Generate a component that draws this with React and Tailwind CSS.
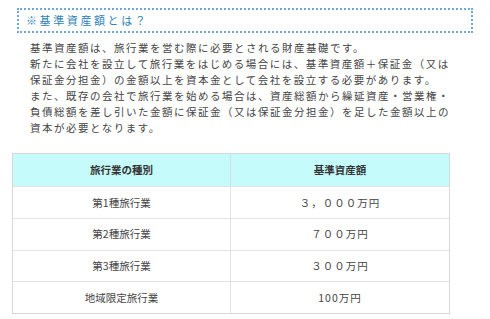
export default function App() {
  const rows = [
    ["第1種旅行業", "３，０００万円"],
    ["第2種旅行業", "７００万円"],
    ["第3種旅行業", "３００万円"],
    ["地域限定旅行業", "100万円"],
  ];
  return (
    <div className="w-[490px] h-[319px] bg-white overflow-hidden pt-[8px] text-[#333]" style={{ fontFamily: '"Noto Sans CJK JP", "Noto Sans", sans-serif' }}>
      <div className="ml-[17px] w-[456px] h-[25px] border-2 border-dotted border-[#6fa8d8] flex items-center pl-[7px]">
        <span className="text-[11px] leading-none tracking-[2.6px] text-[#2f7fb8]">※基準資産額とは？</span>
      </div>
      <div className="mt-[7px] pl-[30px] text-[10.5px] leading-[16px] tracking-[1.5px] text-[#444]">
        <p>基準資産額は、旅行業を営む際に必要とされる財産基礎です。</p>
        <p>新たに会社を設立して旅行業をはじめる場合には、基準資産額＋保証金（又は</p>
        <p>保証金分担金）の金額以上を資本金として会社を設立する必要があります。</p>
        <p>また、既存の会社で旅行業を始める場合は、資産総額から繰延資産・営業権・</p>
        <p>負債総額を差し引いた金額に保証金（又は保証金分担金）を足した金額以上の</p>
        <p>資本が必要となります。</p>
      </div>
      <div className="ml-[12px] mt-[17px] w-[438px] border border-[#d8d8d8] text-[10.5px] text-[#444]">
        <div className="grid grid-cols-2 h-[32px] bg-[#c6fbfc] font-bold text-[#333]">
          <div className="flex items-center justify-center border-r border-[#dcdcdc]">旅行業の種別</div>
          <div className="flex items-center justify-center">基準資産額</div>
        </div>
        {rows.map(([a, b]) => (
          <div key={a} className="grid grid-cols-2 h-[31.75px] border-t border-[#e2e2e2]">
            <div className="flex items-center justify-center border-r border-[#e2e2e2]">{a}</div>
            <div className="flex items-center justify-center tracking-[1px]">{b}</div>
          </div>
        ))}
      </div>
    </div>
  );
}
